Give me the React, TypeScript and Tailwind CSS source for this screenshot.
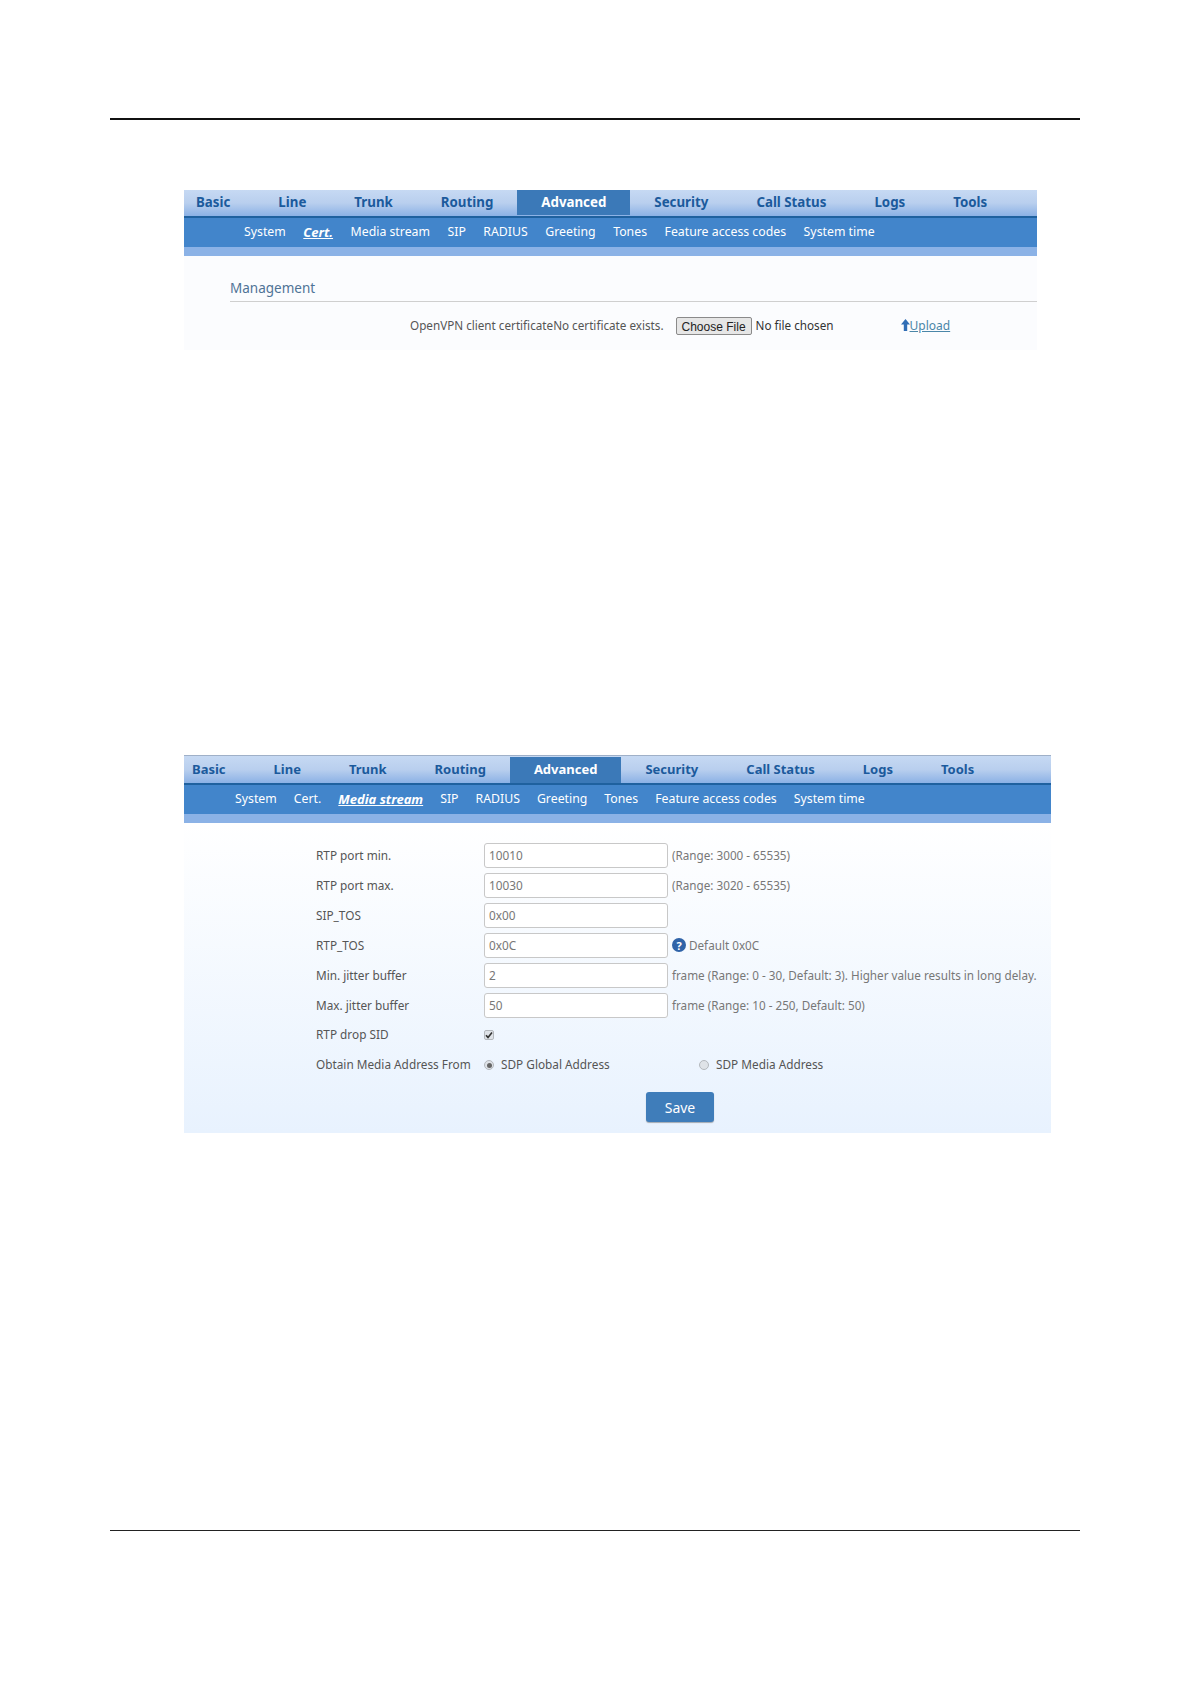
const font = { fontFamily: '"Noto Sans", Tahoma, sans-serif' };

const tabs = ['Basic', 'Line', 'Trunk', 'Routing', 'Advanced', 'Security', 'Call Status', 'Logs', 'Tools'];
const subs = ['System', 'Cert.', 'Media stream', 'SIP', 'RADIUS', 'Greeting', 'Tones', 'Feature access codes', 'System time'];

const NavBars = ({ active, tabBar, tabRow, subBar }: { active: string; tabBar: string; tabRow: string; subBar: string }) => (
  <div>
    <div className={`bg-gradient-to-b from-[#c6d9f3] via-[#b9cfee] to-[#8bb1e5] ${tabBar}`}>
      <div className={`flex h-full font-bold ${tabRow}`}>
        {tabs.map((t) => (
          <div
            key={t}
            className={
              t === 'Advanced'
                ? 'flex items-center whitespace-nowrap bg-[#3b79b8] px-6 text-white'
                : 'flex items-center whitespace-nowrap px-6 text-[#1b5a9c]'
            }
          >
            {t}
          </div>
        ))}
      </div>
    </div>
    <div className={`flex h-[31px] items-center border-t-2 border-[#1f619f] bg-[#4285cb] text-white ${subBar}`}>
      {subs.map((s) => (
        <span key={s} className={s === active ? 'text-[13px] font-bold italic underline' : ''}>
          {s}
        </span>
      ))}
    </div>
    <div className="h-[9px] bg-[#8bb2e6]" />
  </div>
);

const rows = [
  { label: 'RTP port min.', value: '10010', note: '(Range: 3000 - 65535)' },
  { label: 'RTP port max.', value: '10030', note: '(Range: 3020 - 65535)' },
  { label: 'SIP_TOS', value: '0x00', note: '' },
  { label: 'RTP_TOS', value: '0x0C', note: 'Default 0x0C', help: true },
  { label: 'Min. jitter buffer', value: '2', note: 'frame (Range: 0 - 30, Default: 3). Higher value results in long delay.' },
  { label: 'Max. jitter buffer', value: '50', note: 'frame (Range: 10 - 250, Default: 50)' },
];

const HelpIcon = () => (
  <span className="mr-[3px] flex h-[14px] w-[14px] items-center justify-center rounded-full bg-[#2f63a8] text-[11px] font-bold leading-none text-white">
    ?
  </span>
);

const Radio = ({ on }: { on?: boolean }) => (
  <span className="flex h-[10px] w-[10px] items-center justify-center rounded-full border border-[#b4b8bd] bg-[#dfe3e8]">
    {on && <span className="h-[5px] w-[5px] rounded-full bg-[#666]" />}
  </span>
);

const CheckBox = () => (
  <span className="flex h-[10px] w-[10px] items-center justify-center rounded-[2px] border border-[#b4b8bd] bg-[#dfe3e8]">
    <svg width="8" height="8" viewBox="0 0 8 8" fill="none">
      <path d="M1 4.2 3 6.4 7 1.4" stroke="#333" strokeWidth="1.6" />
    </svg>
  </span>
);

const UpArrow = () => (
  <svg width="9" height="12" viewBox="0 0 9 12" className="mb-[2px]">
    <path d="M4.5 0 9 5.5H6.2V12H2.8V5.5H0Z" fill="#2f6db5" />
  </svg>
);

export default function App() {
  return (
    <div className="h-[1684px] bg-white pt-[118px]" style={font}>
      <div className="ml-[110px] h-[2px] w-[970px] bg-[#111]" />

      <div className="ml-[184px] mt-[70px] w-[853px]">
        <NavBars active="Cert." tabBar="h-[26px] pb-[1px]" tabRow="-ml-3 text-[13.3px]" subBar="gap-[17.5px] pl-[60px] text-[12.3px]" />
        <div className="h-[94px] bg-[#fbfcfe] pl-[46px]">
          <div className="flex h-[46px] items-end border-b border-[#cfcfcf] pb-[3px] text-[13.5px] text-[#4f7396]">Management</div>
          <div className="flex h-[48px] items-center text-[11.7px] text-[#555]">
            <span className="ml-[180px]">OpenVPN client certificateNo certificate exists.</span>
            <button className="ml-[12px] h-[18px] w-[76px] rounded-[2px] border border-[#8a8a8a] bg-[#e6e6e6] text-[12px] text-[#222]" style={{ fontFamily: '"Liberation Sans", Arial, sans-serif' }}>
              Choose File
            </button>
            <span className="ml-1 text-[#333]">No file chosen</span>
            <span className="ml-[67px] flex items-center text-[12px] text-[#4a86a8] underline">
              <UpArrow />
              Upload
            </span>
          </div>
        </div>
      </div>

      <div className="ml-[184px] mt-[405px] w-[867px] border-t border-[#9fb0c8]">
        <NavBars active="Media stream" tabBar="h-[27px] pt-[1px]" tabRow="-ml-4 text-[13px]" subBar="gap-[17px] pl-[51px] text-[12.3px]" />
        <div className="h-[310px] bg-gradient-to-b from-white to-[#e8f2fe] pl-[132px] pt-[20px] text-[11.8px] text-[#555]">
          <div className="flex flex-col gap-[5px]">
            {rows.map((r) => (
              <div key={r.label} className="flex h-[25px] items-center">
                <span className="w-[168px]">{r.label}</span>
                <div className="flex h-[25px] w-[184px] items-center rounded-[3px] border border-[#c8c8c8] bg-white px-[4px] text-[#777]">{r.value}</div>
                <span className="ml-[4px] flex items-center whitespace-nowrap text-[11.7px] text-[#777]">
                  {r.help && <HelpIcon />}
                  {r.note}
                </span>
              </div>
            ))}
          </div>
          <div className="mt-[2px] flex h-[30px] items-center">
            <span className="w-[168px]">RTP drop SID</span>
            <CheckBox />
          </div>
          <div className="flex h-[30px] items-center">
            <span className="w-[168px]">Obtain Media Address From</span>
            <Radio on />
            <span className="ml-[7px] w-[198px]">SDP Global Address</span>
            <Radio />
            <span className="ml-[7px]">SDP Media Address</span>
          </div>
          <button className="ml-[330px] mt-[12px] h-[30px] w-[68px] rounded-[3px] bg-[#3f7dba] text-[14px] text-white shadow-[0_1px_1px_rgba(0,0,0,0.3)]">Save</button>
        </div>
      </div>

      <div className="ml-[110px] mt-[397px] h-px w-[970px] bg-[#222]" />
    </div>
  );
}
